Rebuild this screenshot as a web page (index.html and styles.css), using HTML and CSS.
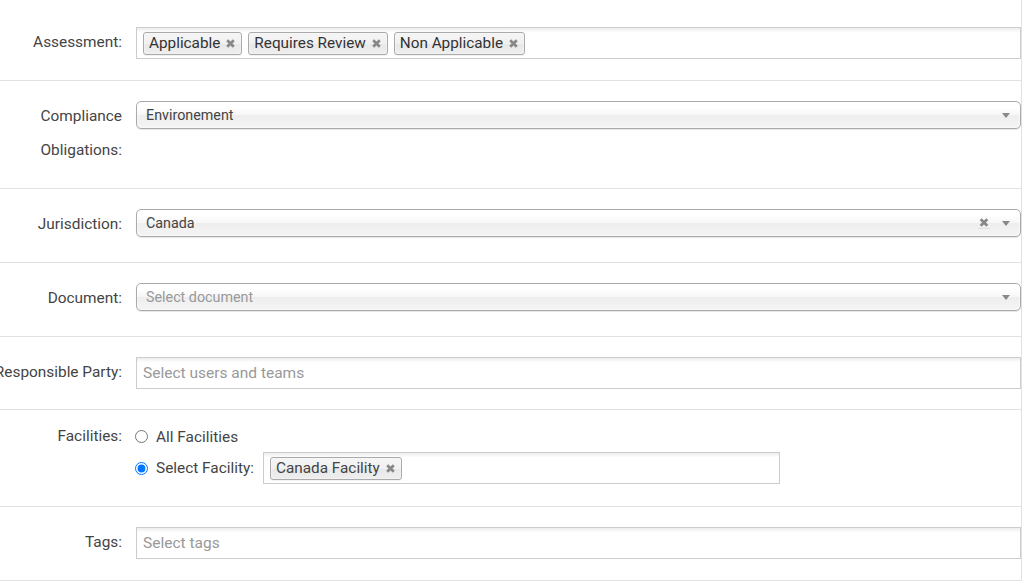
FILE: index.html
```html
<!DOCTYPE html>
<html>
<head>
<meta charset="utf-8">
<link rel="stylesheet" href="styles.css">
</head>
<body>
<div class="form">
  <div class="row row-first">
    <div class="label"><span>Assessment:</span></div>
    <div class="field">
      <div class="multi">
        <span class="chip">Applicable<svg class="x" viewBox="0 0 10 10"><path d="M2 2L8 8M8 2L2 8"/></svg></span>
        <span class="chip">Requires Review<svg class="x" viewBox="0 0 10 10"><path d="M2 2L8 8M8 2L2 8"/></svg></span>
        <span class="chip">Non Applicable<svg class="x" viewBox="0 0 10 10"><path d="M2 2L8 8M8 2L2 8"/></svg></span>
      </div>
    </div>
  </div>

  <div class="row">
    <div class="label"><span>Compliance Obligations:</span></div>
    <div class="field field-select">
      <div class="single"><span class="value">Environement</span><span class="arrow"></span></div>
    </div>
  </div>

  <div class="row">
    <div class="label"><span>Jurisdiction:</span></div>
    <div class="field field-select">
      <div class="single"><span class="value">Canada</span><svg class="clear" viewBox="0 0 10 10"><path d="M2 2L8 8M8 2L2 8"/></svg><span class="arrow"></span></div>
    </div>
  </div>

  <div class="row">
    <div class="label"><span>Document:</span></div>
    <div class="field field-select">
      <div class="single"><span class="value placeholder">Select document</span><span class="arrow"></span></div>
    </div>
  </div>

  <div class="row row-resp">
    <div class="label"><span class="nowrap">Responsible Party:</span></div>
    <div class="field">
      <div class="multi"><span class="placeholder-lg">Select users and teams</span></div>
    </div>
  </div>

  <div class="row row-fac">
    <div class="label label-short"><span>Facilities:</span></div>
    <div class="field radios">
      <label class="radio-line"><input type="radio" name="fac"><span>All Facilities</span></label>
      <div class="radio-line radio-select">
        <label class="radio-opt"><input type="radio" name="fac" checked><span>Select Facility:</span></label>
        <div class="multi multi-fac">
          <span class="chip">Canada Facility<svg class="x" viewBox="0 0 10 10"><path d="M2 2L8 8M8 2L2 8"/></svg></span>
        </div>
      </div>
    </div>
  </div>

  <div class="row">
    <div class="label"><span>Tags:</span></div>
    <div class="field">
      <div class="multi"><span class="placeholder-lg">Select tags</span></div>
    </div>
  </div>
</div>
</body>
</html>
```

FILE: styles.css
```css
* { box-sizing: border-box; }
html, body { margin: 0; padding: 0; background: #fff; }
body {
  font-family: Roboto, "Liberation Sans", Arial, sans-serif;
  font-size: 15.4px;
  color: #444;
}
.form {
  width: 1022px;
  border-right: 1px solid #e2e2e2;
  padding-top: 7px;
}
.row {
  display: flex;
  align-items: flex-start;
  padding: 18px 0 21px;
  border-bottom: 1px solid #e2e2e2;
}
.row-resp { padding-bottom: 20px; }
.label {
  flex: none;
  width: 122px;
  margin-right: 14px;
  display: flex;
  justify-content: flex-end;
  text-align: right;
  line-height: 34px;
  font-size: 15.4px;
  color: #444;
}
.nowrap { white-space: nowrap; }
.field {
  flex: 1;
  min-width: 0;
  padding-top: 2px;
}
.field-select { padding-top: 2px; }

.single {
  height: 28px;
  border: 1px solid #aaa;
  border-radius: 5px;
  background: linear-gradient(#fff 20%, #f6f6f6 50%, #eee 52%, #f4f4f4 100%);
  box-shadow: inset 0 0 3px #fff, 0 1px 1px rgba(0,0,0,.1);
  display: flex;
  align-items: center;
  padding: 0 10px 0 9px;
  font-size: 14.3px;
  color: #444;
}
.single .value { flex: 1; }
.single .placeholder { color: #999; }
.arrow {
  width: 0; height: 0;
  border-left: 4px solid transparent;
  border-right: 4px solid transparent;
  border-top: 5px solid #888;
}
.clear {
  width: 12px; height: 12px;
  margin-right: 12px;
  stroke: #888;
  stroke-width: 2.4;
  border-bottom: 1px solid #e0e0e0;
}

.multi {
  min-height: 32px;
  border: 1px solid #ccc;
  background: linear-gradient(#eee 1%, #fff 15%);
  display: flex;
  align-items: center;
  gap: 6px;
  padding: 0 6px;
}
.chip {
  display: inline-flex;
  align-items: center;
  height: 23px;
  padding: 1px 5px 0 5px;
  border: 1px solid #aaa;
  border-radius: 3px;
  background: linear-gradient(#f4f4f4 20%, #f0f0f0 50%, #e8e8e8 52%, #eee 100%);
  box-shadow: inset 0 0 2px #fff, 0 1px 0 rgba(0,0,0,.05);
  color: #333;
  font-size: 15.3px;
  line-height: 1;
}
.x {
  width: 11px; height: 11px;
  margin-left: 5px;
  stroke: #888;
  stroke-width: 2.5;
}
.placeholder-lg { color: #999; font-size: 15.5px; }

.row-fac { padding-bottom: 22px; }
.label-short { line-height: 17px; }
.radios {
  padding-top: 0;
  display: flex;
  flex-direction: column;
  gap: 7px;
}
.radio-line {
  display: flex;
  align-items: center;
  height: 17px;
}
.radio-line input, .radio-opt input {
  width: 13px; height: 13px;
  margin: 0 8px 0 -1px;
}
.radio-select { height: 32px; }
.radio-opt { display: flex; align-items: center; margin-right: 9px; }
.multi-fac { width: 517px; }
.radios span { color: #444; }
```
